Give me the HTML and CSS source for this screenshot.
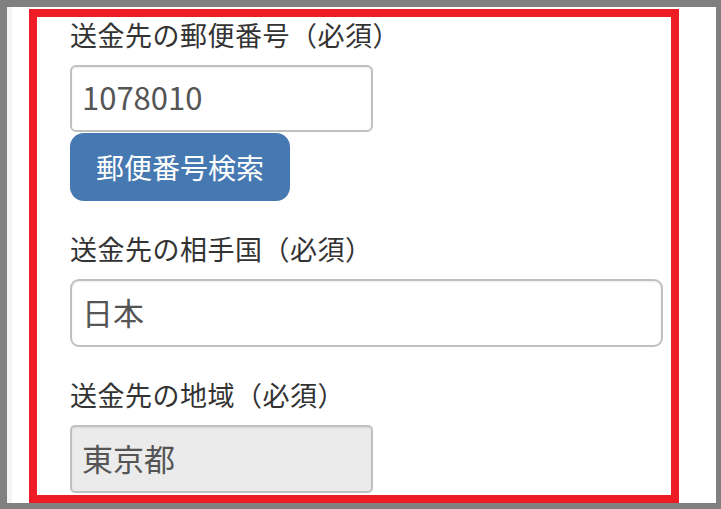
FILE: index.html
```html
<!DOCTYPE html>
<html lang="ja">
<head>
  <meta charset="UTF-8">
  <meta name="viewport" content="width=device-width, initial-scale=1.0">
  <title>送金先</title>
  <link rel="stylesheet" href="styles.css">
</head>
<body>
  <div class="page">
    <!-- highlighted part of the form -->
    <div class="highlight">
      <div class="form-group">
        <label class="field-label" for="zip">送金先の郵便番号（必須）</label>
        <input id="zip" class="field field-short" type="text" value="1078010">
        <button class="search-button" type="button">郵便番号検索</button>
      </div>

      <div class="form-group">
        <label class="field-label" for="country">送金先の相手国（必須）</label>
        <input id="country" class="field field-wide" type="text" value="日本">
      </div>

      <div class="form-group">
        <label class="field-label" for="region">送金先の地域（必須）</label>
        <input id="region" class="field field-short field-locked" type="text" value="東京都" readonly>
      </div>
    </div>
  </div>
</body>
</html>
```

FILE: styles.css
```css
html, body {
  margin: 0;
  height: 100%;
}

body {
  box-sizing: border-box;
  padding: 7px 5px 6px 7px;
  background: #808080;
  font-family: "Noto Sans CJK JP", "Noto Sans", sans-serif;
  overflow: hidden;
}

.page {
  display: flex;
  height: 100%;
  background: #fff;
  border-left: 5px solid #f3f3f3;
}

/* red outline around the area of interest */
.highlight {
  box-sizing: border-box;
  width: 650px;
  height: 494px;
  margin: 2px 0 0 17px;
  padding: 0 8px 0 33px;
  border: 8px solid #ee1c25;
  overflow: hidden;
}

.form-group {
  margin-bottom: 30px;
}

.field-label {
  display: block;
  height: 36px;
  line-height: 36px;
  margin-bottom: 12px;
  font-size: 27px;
  letter-spacing: 0.5px;
  color: #333;
}

.field {
  display: block;
  box-sizing: border-box;
  height: 67px;
  padding: 0 10px 4px;
  border: 2px solid #c0c0c0;
  border-radius: 6px;
  background: #fff;
  box-shadow: inset 0 1px 2px rgba(0, 0, 0, 0.08);
  font-family: inherit;
  font-size: 31px;
  color: #555;
  outline: none;
}

.field-short {
  width: 303px;
}

.field-wide {
  width: 593px;
  height: 68px;
  border-radius: 9px;
}

.field-locked {
  height: 68px;
  background: #ebebeb;
  border-radius: 5px;
}

.search-button {
  display: block;
  width: 220px;
  height: 68px;
  margin-top: 1px;
  padding: 0;
  border: none;
  border-radius: 14px;
  background: #4679b2;
  color: #fff;
  font-family: inherit;
  font-size: 28px;
  cursor: pointer;
}
```
